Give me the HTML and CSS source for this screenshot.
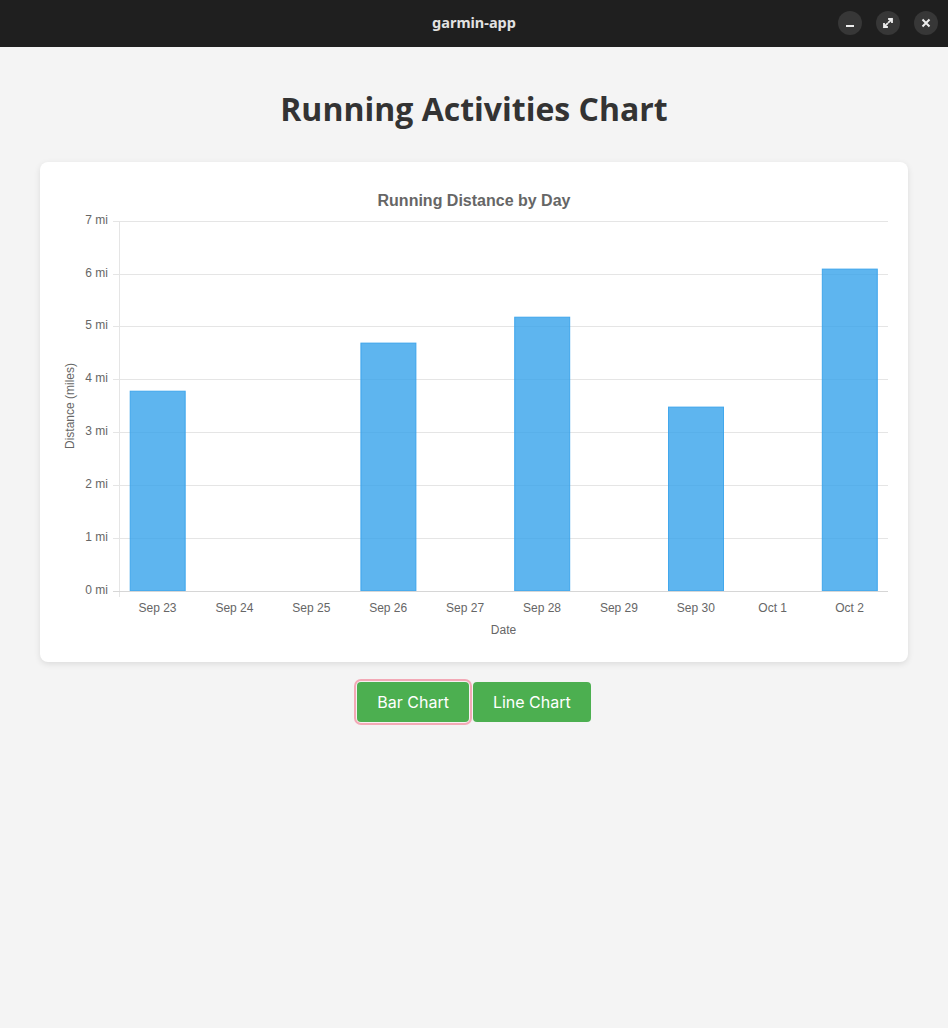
FILE: index.html
```html
<!DOCTYPE html>
<html>
<head>
<meta charset="utf-8">
<link rel="stylesheet" href="styles.css">
</head>
<body>
<header class="titlebar">
  <div class="title">garmin-app</div>
  <div class="controls">
    <span class="ctl"><svg width="24" height="24" viewBox="0 0 24 24"><rect x="8" y="14" width="8" height="2" fill="#eee"/></svg></span>
    <span class="ctl"><svg width="24" height="24" viewBox="0 0 24 24"><path d="M13 8h3v3M16 8l-3.2 3.2M11 16H8v-3M8 16l3.2-3.2" stroke="#eee" stroke-width="1.8" fill="none" stroke-linecap="square"/></svg></span>
    <span class="ctl"><svg width="24" height="24" viewBox="0 0 24 24"><path d="M8.5 8.5l7 7M15.5 8.5l-7 7" stroke="#eee" stroke-width="2" fill="none"/></svg></span>
  </div>
</header>
<main class="page">
  <h1 class="heading">Running Activities Chart</h1>
  <section class="card">
    <svg class="chart" width="868" height="500" viewBox="40 162 868 500">
      <text class="ctitle" x="474" y="206" text-anchor="middle">Running Distance by Day</text>
      <g class="grid">
        <line x1="113" x2="888" y1="221.5" y2="221.5"/>
        <line x1="113" x2="888" y1="274.5" y2="274.5"/>
        <line x1="113" x2="888" y1="326.5" y2="326.5"/>
        <line x1="113" x2="888" y1="379.5" y2="379.5"/>
        <line x1="113" x2="888" y1="432.5" y2="432.5"/>
        <line x1="113" x2="888" y1="485.5" y2="485.5"/>
        <line x1="113" x2="888" y1="538.5" y2="538.5"/>
        <line x1="119.5" x2="119.5" y1="221" y2="597"/>
      </g>
      <g class="ylab" text-anchor="end">
        <text x="108" y="224">7 mi</text>
        <text x="108" y="277">6 mi</text>
        <text x="108" y="329">5 mi</text>
        <text x="108" y="382">4 mi</text>
        <text x="108" y="435">3 mi</text>
        <text x="108" y="488">2 mi</text>
        <text x="108" y="541">1 mi</text>
        <text x="108" y="594">0 mi</text>
      </g>
      <g class="bars">
        <rect x="130.2" y="391.2" width="55" height="199.8"/>
        <rect x="360.9" y="343.1" width="55" height="247.9"/>
        <rect x="514.7" y="317.2" width="55" height="273.8"/>
        <rect x="668.5" y="407.1" width="55" height="183.9"/>
        <rect x="822.3" y="269.1" width="55" height="321.9"/>
      </g>
      <line class="axis" x1="113" x2="888" y1="591.5" y2="591.5"/>
      <g class="xlab" text-anchor="middle">
        <text x="157.5" y="612">Sep 23</text>
        <text x="234.4" y="612">Sep 24</text>
        <text x="311.3" y="612">Sep 25</text>
        <text x="388.2" y="612">Sep 26</text>
        <text x="465.1" y="612">Sep 27</text>
        <text x="542" y="612">Sep 28</text>
        <text x="618.9" y="612">Sep 29</text>
        <text x="695.8" y="612">Sep 30</text>
        <text x="772.7" y="612">Oct 1</text>
        <text x="849.6" y="612">Oct 2</text>
      </g>
      <text class="atitle" x="503.5" y="634" text-anchor="middle">Date</text>
      <text class="atitle" x="0" y="0" text-anchor="middle" transform="translate(74 406) rotate(-90)">Distance (miles)</text>
    </svg>
  </section>
  <div class="toggles">
    <button class="btn focused">Bar Chart</button>
    <button class="btn">Line Chart</button>
  </div>
</main>
</body>
</html>
```

FILE: styles.css
```css
html, body {
  margin: 0;
  padding: 0;
  background: #f4f4f4;
}
body {
  font-family: "Open Sans", "Noto Sans", sans-serif;
  width: 948px;
  height: 1028px;
  overflow: hidden;
}
.titlebar {
  height: 47px;
  background: #1f1f1f;
  display: flex;
  align-items: center;
  justify-content: center;
  position: relative;
}
.title {
  color: #e2e2e2;
  font-family: "Noto Sans", sans-serif;
  font-weight: 700;
  font-size: 14.5px;
  margin-top: -4px;
}
.controls {
  position: absolute;
  right: 10px;
  top: 11px;
  display: flex;
  gap: 14px;
}
.ctl {
  width: 24px;
  height: 24px;
  border-radius: 50%;
  background: #373737;
  display: block;
}
.ctl svg { display: block; }
.page {
  display: flex;
  flex-direction: column;
  align-items: center;
  padding-top: 39px;
}
.heading {
  margin: 0;
  font-size: 32px;
  font-weight: 700;
  color: #333;
  line-height: 45px;
  font-family: "Open Sans", sans-serif;
}
.card {
  margin-top: 31px;
  width: 868px;
  height: 500px;
  background: #fff;
  border-radius: 8px;
  box-shadow: 0 2px 6px rgba(0,0,0,0.1);
}
.chart {
  display: block;
  font-family: "Liberation Sans", Arial, sans-serif;
}
.ctitle {
  font-size: 16px;
  font-weight: 700;
  fill: #666;
}
.grid line {
  stroke: #e5e5e5;
  stroke-width: 1;
}
.axis {
  stroke: #d6d6d6;
  stroke-width: 1;
}
.ylab text, .xlab text, .atitle {
  font-size: 12px;
  fill: #666;
}
.bars rect {
  fill: rgba(54,162,235,0.8);
  stroke: rgba(54,162,235,0.9);
  stroke-width: 1;
}
.toggles {
  margin-top: 20px;
  display: flex;
  gap: 4px;
}
.btn {
  font-family: "Inter", sans-serif;
  font-size: 16px;
  color: #fff;
  background: #4caf50;
  border: none;
  border-radius: 4px;
  height: 40px;
  padding: 0 20px;
  cursor: pointer;
}
.btn.focused {
  box-shadow: 0 0 0 1px #f7f0f1, 0 0 0 3px #f3a9b6;
}
```
